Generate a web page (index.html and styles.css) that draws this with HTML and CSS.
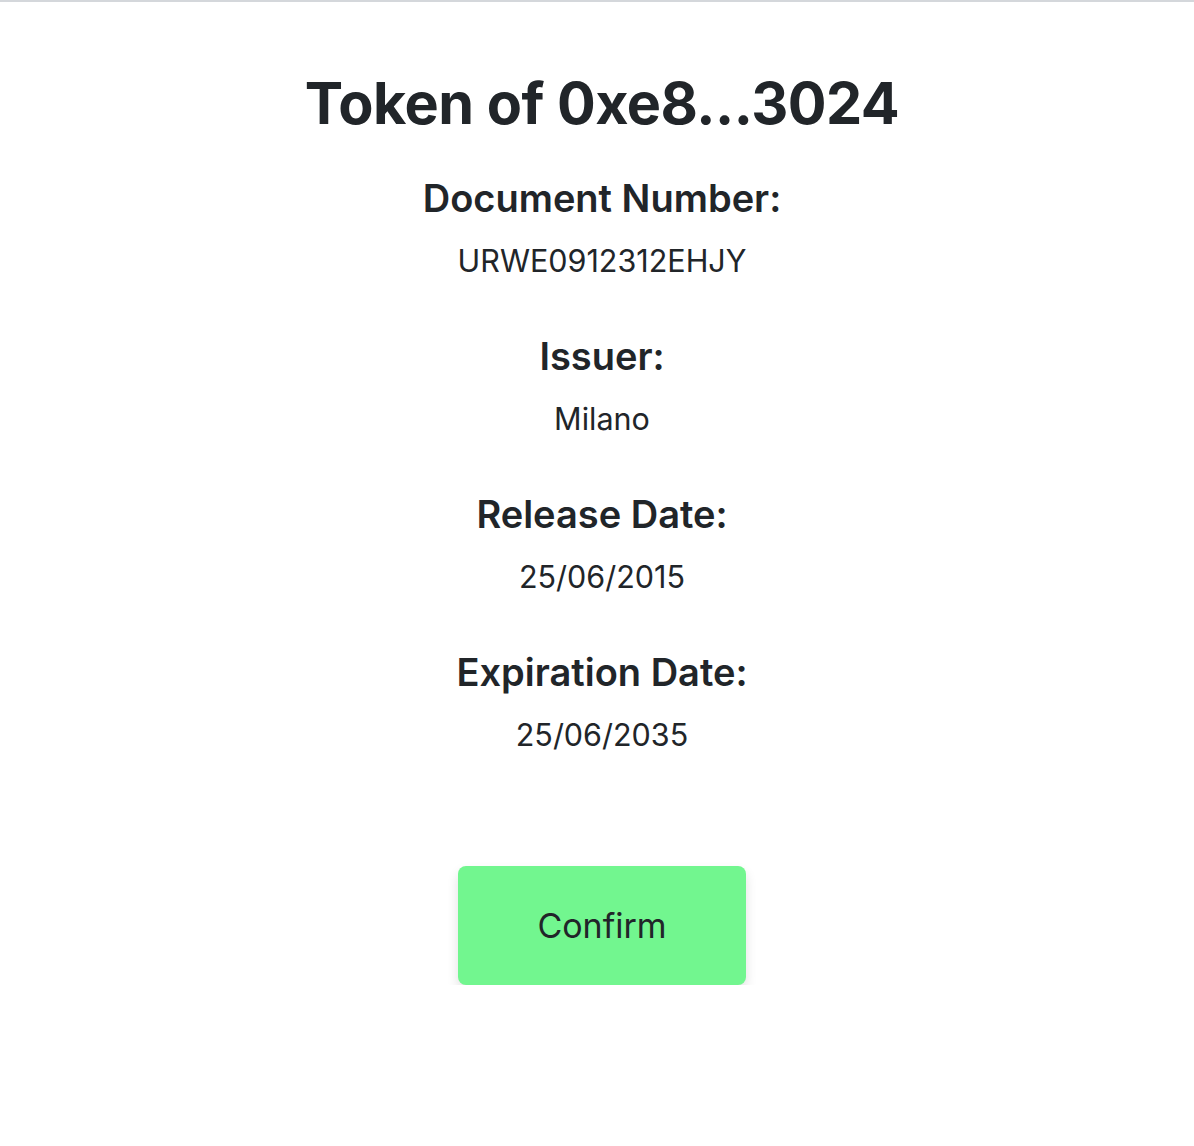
FILE: index.html
```html
<!DOCTYPE html>
<html>
<head>
<meta charset="utf-8">
<link rel="stylesheet" href="styles.css">
</head>
<body>
<div class="topline"></div>
<main class="page">
  <h1 class="title">Token of 0xe8...3024</h1>
  <div class="fields">
    <section class="field">
      <h2 class="label">Document Number:</h2>
      <p class="value">URWE0912312EHJY</p>
    </section>
    <section class="field">
      <h2 class="label">Issuer:</h2>
      <p class="value">Milano</p>
    </section>
    <section class="field">
      <h2 class="label">Release Date:</h2>
      <p class="value">25/06/2015</p>
    </section>
    <section class="field">
      <h2 class="label">Expiration Date:</h2>
      <p class="value">25/06/2035</p>
    </section>
  </div>
  <button class="confirm">Confirm</button>
</main>
</body>
</html>
```
FILE: styles.css
```css
html, body {
  margin: 0;
  padding: 0;
  background: #ffffff;
}
body {
  font-family: Inter, "Noto Sans", sans-serif;
  color: #212529;
}
.topline {
  height: 2px;
  background: #d4d7db;
}
.page {
  display: flex;
  flex-direction: column;
  align-items: center;
  text-align: center;
  padding-left: 10px;
}
.title {
  margin: 66px 0 0 0;
  font-size: 57.5px;
  line-height: 70px;
  font-weight: 700;
  letter-spacing: -0.5px;
}
.fields {
  margin-top: 38px;
  display: flex;
  flex-direction: column;
  align-items: center;
  gap: 53px;
}
.field {
  display: flex;
  flex-direction: column;
  align-items: center;
}
.label {
  margin: 0;
  font-size: 38px;
  line-height: 44px;
  font-weight: 600;
}
.value {
  margin: 21px 0 0 0;
  font-size: 30.5px;
  line-height: 40px;
  font-weight: 400;
}
.confirm {
  margin-top: 111px;
  width: 288px;
  height: 119px;
  border: none;
  border-radius: 8px;
  background: #72f68f;
  color: #212529;
  font-family: Inter, "Noto Sans", sans-serif;
  font-size: 34px;
  font-weight: 400;
  box-shadow: 0 6px 12px rgba(0, 0, 0, 0.12);
}
```
